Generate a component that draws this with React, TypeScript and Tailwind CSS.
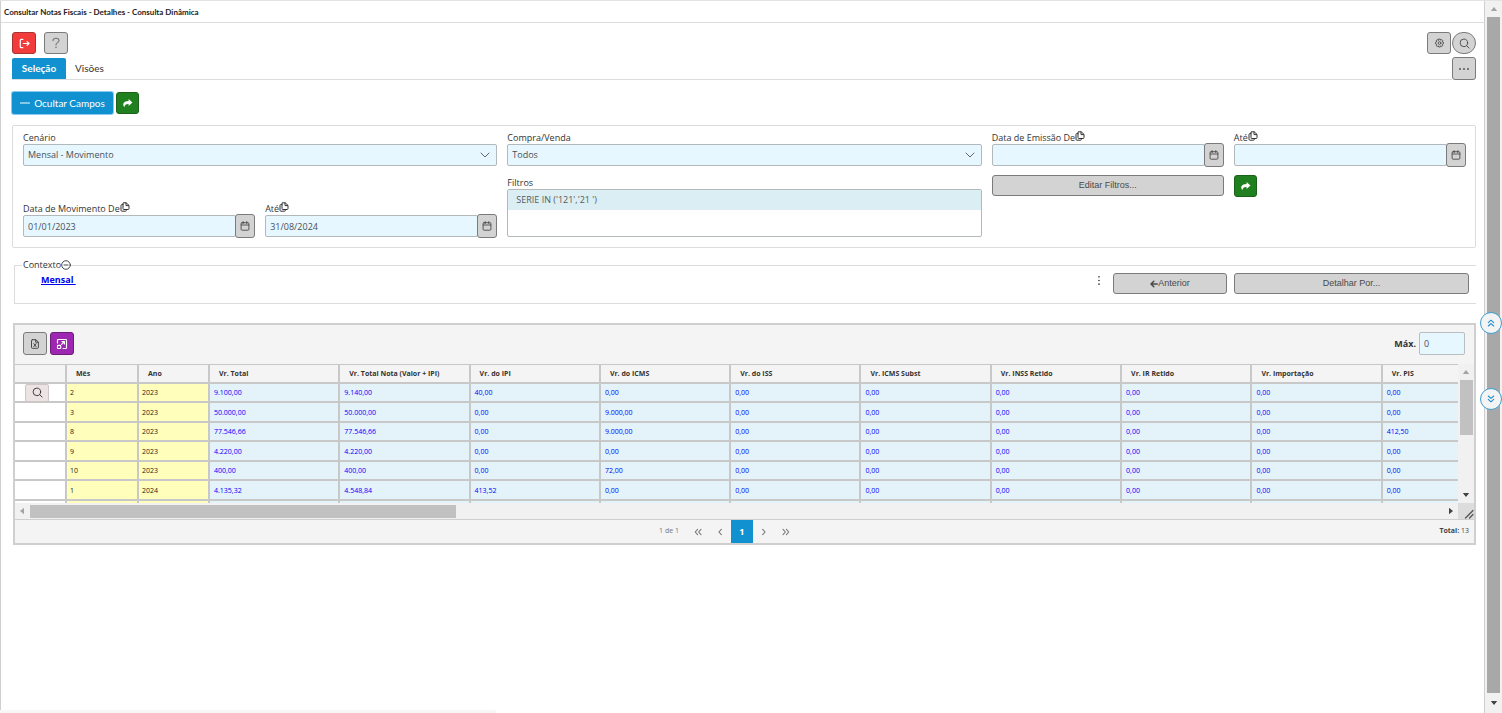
import React from "react";

type IconProps = { className?: string };

const stroke = {
  fill: "none",
  stroke: "currentColor",
  strokeLinecap: "round" as const,
  strokeLinejoin: "round" as const,
};

const ExitIcon = () => (
  <svg viewBox="0 0 12 12" className="size-[11px]" {...stroke} strokeWidth="1.3">
    <path d="M4.2 1.5H2.4a1 1 0 0 0-1 1v7a1 1 0 0 0 1 1h1.8M4.8 6H11M8.8 3.9 11 6 8.8 8.1" />
  </svg>
);

const HelpIcon = () => (
  <svg viewBox="0 0 12 12" className="size-3 text-[#777]" {...stroke} strokeWidth="1.1">
    <path d="M3 3.6C3.2 2 4.4 1.2 6 1.2s3 .9 3 2.5c0 1.9-3 2-3 3.9v.3" />
    <circle cx="6" cy="10.3" r=".3" />
  </svg>
);

const GearIcon = () => (
  <svg viewBox="0 0 12 12" className="size-[11px]" {...stroke} strokeWidth="1">
    <path d="M5.2 1.2h1.6l.4 1.2 1.3-.6 1.1 1.1-.6 1.3 1.3.5v1.5l-1.3.6.6 1.3-1.1 1.1-1.3-.6-.4 1.2H5.2l-.5-1.2-1.2.6-1.2-1.1.6-1.3-1.3-.6V4.7l1.3-.5-.6-1.3 1.2-1.1 1.2.6z" />
    <circle cx="6" cy="5.5" r="1.5" />
  </svg>
);

const SearchIcon = () => (
  <svg viewBox="0 0 12 12" className="size-[11px]" {...stroke} strokeWidth="1">
    <circle cx="5.3" cy="5.3" r="4.1" />
    <path d="m8.4 8.4 2.6 2.6" />
  </svg>
);

const ShareIcon = () => (
  <svg viewBox="0 0 12 12" className="size-[11px]" fill="currentColor">
    <path d="M7.2 1.2 11.4 5 7.2 8.8V6.6C4.6 6.5 2.9 7 2.6 10.2 0 6.6 1.6 3.4 7.2 3.3z" />
  </svg>
);

const CopyIcon = () => (
  <svg viewBox="0 0 10 10" className="mb-1 size-[10px]" {...stroke} strokeWidth="1">
    <path d="M3.4.8h2.8L9 3.4v3.2a.9.9 0 0 1-.9.9H3.9a.9.9 0 0 1-.9-.9V1.4M6 1v2.6h2.6M3 2.6H1.8a.8.8 0 0 0-.8.8v4.9c0 .5.4.9.9.9h3.6c.6 0 .9-.4.9-.9v-.6" />
  </svg>
);

const CalendarIcon = () => (
  <svg viewBox="0 0 10 10" className="size-[10px]" {...stroke} strokeWidth=".9">
    <rect x="1.1" y="1.7" width="7.8" height="7.5" rx="1" />
    <path d="M1.2 4h7.6M3.2.6v2M6.8.6v2" />
  </svg>
);

const ChevronDown = () => (
  <svg viewBox="0 0 10 10" className="pointer-events-none absolute top-1.5 right-[7px] size-[10px] text-[#666]" {...stroke} strokeWidth="1">
    <path d="M1 3l4 4 4-4" />
  </svg>
);

const FileIcon = () => (
  <svg viewBox="0 0 10 10" className="size-[10px]" {...stroke} strokeWidth="1">
    <path d="M2.3.7h3.5L8.4 3v5.4a.9.9 0 0 1-.9.9H2.3a.8.8 0 0 1-.8-.9V1.5a.8.8 0 0 1 .8-.8zM5.6.9v2.3h2.6M3.8 4.6l2.3 3M6.1 4.6l-2.3 3" />
  </svg>
);

const ExpandIcon = () => (
  <svg viewBox="0 0 12 12" className="size-3" {...stroke} strokeWidth="1.2">
    <path d="M1.5 5V2.3c0-.5.3-.8.8-.8h7.4c.5 0 .8.3.8.8v7.4c0 .5-.3.8-.8.8H7M5.6 6.3l2.5-2.5M6 3.6h2.4V6" />
    <rect x="1.5" y="7.3" width="3.2" height="3.2" rx=".7" />
  </svg>
);

const DoubleChevron = ({ className = "" }: IconProps) => (
  <svg viewBox="0 0 10 10" className={`size-[10px] ${className}`} {...stroke} strokeWidth="1.1">
    <path d="M2.3 4.6 5 2.2l2.7 2.4M2.3 8 5 5.6 7.7 8" />
  </svg>
);

const grayBtn =
  "flex items-center justify-center rounded-[3px] border border-[#7b7b7b] bg-[#d3d3d3] text-[#4a4a4a]";
const greenBtn =
  "flex h-[22px] w-[23px] items-center justify-center rounded-[3px] border border-[#1a611a] bg-[#208020] text-white";
const field =
  "h-[22px] w-full min-w-0 appearance-none rounded-[2px] border border-[#b3b8bb] bg-[#e6f7ff] px-1 text-[9px] text-[#495057] outline-none";

function DateField({ id, label, value }: { id: string; label: string; value: string }) {
  return (
    <div>
      <label htmlFor={id} className="flex h-3 items-center whitespace-nowrap">
        {label}
        <CopyIcon />
      </label>
      <div className="flex">
        <input id={id} defaultValue={value} className={field} />
        <button aria-label={`Calendário ${label}`} className={`${grayBtn} -my-px -ml-px h-6 w-5 shrink-0`}>
          <CalendarIcon />
        </button>
      </div>
    </div>
  );
}

function SelectField({ id, label, options }: { id: string; label: string; options: string[] }) {
  return (
    <div className="col-span-2">
      <label htmlFor={id} className="flex h-3 items-center">
        {label}
      </label>
      <div className="relative">
        <select id={id} className={field}>
          {options.map((o) => (
            <option key={o}>{o}</option>
          ))}
        </select>
        <ChevronDown />
      </div>
    </div>
  );
}

const columns = [
  "Mês",
  "Ano",
  "Vr. Total",
  "Vr. Total Nota (Valor + IPI)",
  "Vr. do IPI",
  "Vr. do ICMS",
  "Vr. do ISS",
  "Vr. ICMS Subst",
  "Vr. INSS Retido",
  "Vr. IR Retido",
  "Vr. Importação",
  "Vr. PIS",
];

const z = "0,00";
const rows = [
  ["2", "2023", "9.100,00", "9.140,00", "40,00", z, z, z, z, z, z, z],
  ["3", "2023", "50.000,00", "50.000,00", z, "9.000,00", z, z, z, z, z, z],
  ["8", "2023", "77.546,66", "77.546,66", z, "9.000,00", z, z, z, z, z, "412,50"],
  ["9", "2023", "4.220,00", "4.220,00", z, z, z, z, z, z, z, z],
  ["10", "2023", "400,00", "400,00", z, "72,00", z, z, z, z, z, z],
  ["1", "2024", "4.135,32", "4.548,84", "413,52", z, z, z, z, z, z, z],
];

function Grid() {
  return (
    <section className="mt-[19px] ml-px border-2 border-[#cfcfcf] bg-[#f4f4f4]">
      <div className="flex h-[39px] items-center justify-between pr-[9px] pb-0.5 pl-2">
        <div className="flex gap-[3px]">
          <button aria-label="Exportar" className={`${grayBtn} h-[23px] w-6`}>
            <FileIcon />
          </button>
          <button
            aria-label="Expandir"
            className="flex h-[23px] w-6 items-center justify-center rounded-[3px] border border-[#6d1c7b] bg-[#9c27b0] text-white"
          >
            <ExpandIcon />
          </button>
        </div>
        <label className="flex items-center gap-[3px] font-bold text-[#333]">
          Máx.
          <input
            defaultValue="0"
            className="h-[23px] w-[46px] rounded-[2px] border border-[#b9bec0] bg-[#e6f7ff] px-1 text-[9px] font-normal text-[#495057] outline-none"
          />
        </label>
      </div>
      <div className="flex">
        <div className="h-[139px] min-w-0 flex-1 overflow-hidden">
          <table className="w-[1498px] table-fixed border-separate border-spacing-0 text-left text-[7px] leading-[9px]">
            <colgroup>
              <col className="w-[52px]" />
              <col className="w-[72px]" />
              <col className="w-[71px]" />
            </colgroup>
            <thead>
              <tr className="h-5">
                <th className="border-t border-r-2 border-b-2 border-[#c8c8c8] p-0" aria-label="Ações" />
                {columns.map((c) => (
                  <th key={c} className="border-t border-r-2 border-b-2 border-[#c8c8c8] py-0 pr-0 pl-[9px] font-bold whitespace-nowrap text-[#333]">
                    {c}
                  </th>
                ))}
              </tr>
            </thead>
            <tbody>
              {rows.map((r, i) => (
                <tr key={i} className="odd:h-[19px] even:h-5">
                  <td className="border-r-2 border-b-2 border-[#c8c8c8] bg-white p-0">
                    {i === 0 && (
                      <button
                        aria-label="Detalhar"
                        className="-my-px ml-2.5 flex h-[18px] w-6 items-center justify-center rounded-[2px] border border-[#cfc6c6] bg-[#ece4e4] text-[#333]"
                      >
                        <SearchIcon />
                      </button>
                    )}
                  </td>
                  {r.map((v, j) => (
                    <td
                      key={j}
                      className={
                        j < 2
                          ? "border-r-2 border-b-2 border-[#c8c8c8] bg-[#ffffbb] py-0 pr-0 pl-[3px] text-[#222]"
                          : "border-r-2 border-b-2 border-[#c8c8c8] bg-[#e4f2fa] py-0 pr-0 pl-1 text-[#0000ff]"
                      }
                    >
                      {v}
                    </td>
                  ))}
                </tr>
              ))}
              <tr className="h-5">
                <td className="border-r-2 border-[#c8c8c8] bg-white p-0" />
                {columns.map((c, j) => (
                  <td
                    key={c}
                    className={j < 2 ? "border-r-2 border-[#c8c8c8] bg-[#ffffbb] p-0" : "border-r-2 border-[#c8c8c8] bg-[#e4f2fa] p-0"}
                  />
                ))}
              </tr>
            </tbody>
          </table>
        </div>
        <div className="flex w-4 flex-col items-center bg-[#f1f1f1]">
          <svg viewBox="0 0 8 5" className="my-1.5 h-1 w-2 fill-[#a3a3a3]">
            <path d="M0 5 4 0l4 5z" />
          </svg>
          <div className="h-[55px] w-[13px] bg-[#c1c1c1]" />
          <svg viewBox="0 0 8 5" className="mt-auto mb-1.5 h-1 w-2 fill-[#444]">
            <path d="M0 0h8L4 5z" />
          </svg>
        </div>
      </div>
      <div className="flex h-4 bg-[#f1f1f1]">
        <div className="flex min-w-0 flex-1 items-center px-[5px]">
          <svg viewBox="0 0 5 8" className="mr-1.5 h-2 w-1 fill-[#a3a3a3]">
            <path d="M5 0v8L0 4z" />
          </svg>
          <div className="h-[13px] w-[29.7%] bg-[#c1c1c1]" />
          <svg viewBox="0 0 5 8" className="ml-auto h-2 w-1 fill-[#444]">
            <path d="M0 0v8l5-4z" />
          </svg>
        </div>
        <div className="flex w-4 items-end justify-end bg-[#dcdcdc]">
          <svg viewBox="0 0 10 10" className="size-[10px]" {...stroke} stroke="#555" strokeWidth="1.3">
            <path d="M1.5 9 9 1.5M5.5 9 9 5.5" />
          </svg>
        </div>
      </div>
      <nav className="flex h-6 items-center border-t border-[#cfcfcf] text-[#777]">
        <div className="flex-1" />
        <div className="mr-7 flex h-full items-center text-[7px]">
          <span className="pr-2">1 de 1</span>
          <button aria-label="Primeira" className="flex w-[22px] justify-center">
            <DoubleChevron className="-rotate-90" />
          </button>
          <button aria-label="Anterior" className="flex w-[22px] justify-center">
            <svg viewBox="0 0 10 10" className="size-[10px]" {...stroke} strokeWidth="1.1">
              <path d="M6.3 2.3 3.9 5l2.4 2.7" />
            </svg>
          </button>
          <button className="h-full w-[22px] bg-[#1191cf] text-[9px] font-bold text-white">1</button>
          <button aria-label="Próxima" className="flex w-[22px] justify-center">
            <svg viewBox="0 0 10 10" className="size-[10px]" {...stroke} strokeWidth="1.1">
              <path d="M3.7 2.3 6.1 5 3.7 7.7" />
            </svg>
          </button>
          <button aria-label="Última" className="flex w-[22px] justify-center">
            <DoubleChevron className="rotate-90" />
          </button>
        </div>
        <div className="flex-1 pr-[5px] text-right text-[7px] text-[#444]">
          <b>Total:</b> 13
        </div>
      </nav>
    </section>
  );
}

export default function App() {
  return (
    <div className="relative flex min-h-screen border-t border-[#e3e3e3] bg-white font-['Open_Sans','Noto_Sans',sans-serif] text-[9px] text-[#333]">
      <main className="min-w-0 flex-1 border-r border-l border-[#cfcfcf]">
        <h1 className="flex h-[22px] items-center border-b border-[#dedede] pt-px pl-[3px] font-['Lato',sans-serif] text-[8px] font-bold text-[#222]">
          Consultar Notas Fiscais - Detalhes - Consulta Dinâmica
        </h1>
        <div className="pt-[9px] pr-2 pl-[11px]">
          <div className="flex justify-between">
            <div className="flex gap-2">
              <button aria-label="Sair" className="flex h-[22px] w-6 items-center justify-center rounded-[3px] border border-[#a33] bg-[#f23b3b] text-white">
                <ExitIcon />
              </button>
              <button aria-label="Ajuda" className={`${grayBtn} h-[22px] w-6`}>
                <HelpIcon />
              </button>
            </div>
            <div className="flex gap-px">
              <button aria-label="Configurações" className={`${grayBtn} h-[22px] w-6`}>
                <GearIcon />
              </button>
              <button aria-label="Pesquisar" className="flex h-[22px] w-6 items-center justify-center rounded-full border border-[#7b7b7b] bg-[#d3d3d3] text-[#4a4a4a]">
                <SearchIcon />
              </button>
            </div>
          </div>
          <div className="mt-[3px] flex items-end justify-between">
            <div className="flex h-[22px] flex-1 items-stretch border-b border-[#dcdcdc] font-['Lato',sans-serif] text-[10px]">
              <button className="w-[54px] rounded-t-[2px] bg-[#1191cf] font-bold text-white">Seleção</button>
              <button className="px-[9px] text-[#333]">Visões</button>
            </div>
            <button aria-label="Mais opções" className={`${grayBtn} h-[23px] w-6`}>
              <svg viewBox="0 0 12 4" className="h-1 w-3" fill="currentColor">
                <circle cx="2" cy="2" r=".9" />
                <circle cx="6" cy="2" r=".9" />
                <circle cx="10" cy="2" r=".9" />
              </svg>
            </button>
          </div>
          <div className="mt-3 flex gap-[3px]">
            <button className="flex h-[22px] w-[101px] items-center justify-center gap-1 rounded-[2px] bg-[#1191cf] font-['Lato',sans-serif] text-[10px] text-white ring-1 ring-[#8ccbf0]">
              <svg viewBox="0 0 10 10" className="size-[10px]" {...stroke} strokeWidth="1.1">
                <path d="M.5 5h9" />
              </svg>
              Ocultar Campos
            </button>
            <button aria-label="Executar" className={greenBtn}>
              <ShareIcon />
            </button>
          </div>

          <section className="mt-[11px] grid grid-cols-6 gap-x-[10px] gap-y-[9px] rounded-[2px] border border-[#dcdcdc] px-[9px] pt-1.5 pb-[10px] pl-[10px]">
            <SelectField id="cenario" label="Cenário" options={["Mensal - Movimento"]} />
            <SelectField id="compra" label="Compra/Venda" options={["Todos"]} />
            <DateField id="emissao-de" label="Data de Emissão De" value="" />
            <DateField id="emissao-ate" label="Até" value="" />
            <div className="self-end">
              <DateField id="movimento-de" label="Data de Movimento De" value="01/01/2023" />
            </div>
            <div className="self-end">
              <DateField id="movimento-ate" label="Até" value="31/08/2024" />
            </div>
            <div className="col-span-2 pt-0.5">
              <div id="filtros" className="flex h-3 items-center">
                Filtros
              </div>
              <ul role="listbox" aria-labelledby="filtros" className="h-12 rounded-[2px] border border-[#b3b8bb] bg-white">
                <li role="option" aria-selected="true" className="flex h-5 items-center bg-[#daeef3] pl-2 text-[#5a5a5a]">
                  SERIE IN ('121','21 ')
                </li>
              </ul>
            </div>
            <button className={`${grayBtn} h-[21px] font-['Liberation_Sans',sans-serif] text-[9px]`}>Editar Filtros...</button>
            <button aria-label="Aplicar filtros" className={greenBtn}>
              <ShareIcon />
            </button>
          </section>

          <fieldset className="mt-[11px] ml-0.5 border border-r-0 border-[#dcdcdc] pr-[7px] pb-[9px] pl-[26px]">
            <legend className="-ml-[19px] flex h-3 items-center pl-px">
              Contexto
              <svg viewBox="0 0 10 10" className="size-[10px]" {...stroke} strokeWidth=".9">
                <circle cx="5" cy="5" r="4.3" />
                <path d="M3 5h4" />
              </svg>
            </legend>
            <div className="flex h-[23px] items-end">
              <a href="#mensal" className="mb-2 flex-1 leading-3 font-bold whitespace-pre text-[#0000ee] underline">
                {"Mensal "}
              </a>
              <button aria-label="Opções" className="mr-3 mb-2 flex text-[#333]">
                <svg viewBox="0 0 4 12" className="h-[11px] w-1" fill="currentColor">
                  <circle cx="2" cy="2" r=".9" />
                  <circle cx="2" cy="6" r=".9" />
                  <circle cx="2" cy="10" r=".9" />
                </svg>
              </button>
              <button className={`${grayBtn} mr-[7px] h-[21px] w-[114px] font-['Liberation_Sans',sans-serif] text-[9px]`}>
                <svg viewBox="0 0 8 8" className="size-2" {...stroke} strokeWidth="1.5">
                  <path d="M7.2 4H1.2M3.8 1.2 1 4l2.8 2.8" />
                </svg>
                Anterior
              </button>
              <button className={`${grayBtn} h-[21px] w-[235px] font-['Liberation_Sans',sans-serif] text-[9px]`}>Detalhar Por...</button>
            </div>
          </fieldset>

          <Grid />
        </div>
      </main>

      <div className="flex w-[17px] flex-col items-center bg-[#f1f1f1]">
        <svg viewBox="0 0 8 5" className="mt-1.5 mb-1.5 h-1 w-2 fill-[#a3a3a3]">
          <path d="M0 5 4 0l4 5z" />
        </svg>
        <div className="w-[13px] flex-1 bg-[#a8a8a8]" />
        <svg viewBox="0 0 8 5" className="my-2 h-1 w-2 fill-[#444]">
          <path d="M0 0h8L4 5z" />
        </svg>
      </div>

      <div className="absolute top-[311px] right-0 flex flex-col gap-[54px]">
        <button aria-label="Subir" className="flex size-[22px] items-center justify-center rounded-full border border-[#3a9fd0] bg-[#f4f4f4] text-[#1c8fcd]">
          <DoubleChevron />
        </button>
        <button aria-label="Descer" className="flex size-[22px] items-center justify-center rounded-full border border-[#3a9fd0] bg-[#f4f4f4] text-[#1c8fcd]">
          <DoubleChevron className="rotate-180" />
        </button>
      </div>
      <div className="absolute bottom-0 left-0 h-[3px] w-[33%] rounded-tr-[2px] bg-[#f7f7f7]" />
    </div>
  );
}
